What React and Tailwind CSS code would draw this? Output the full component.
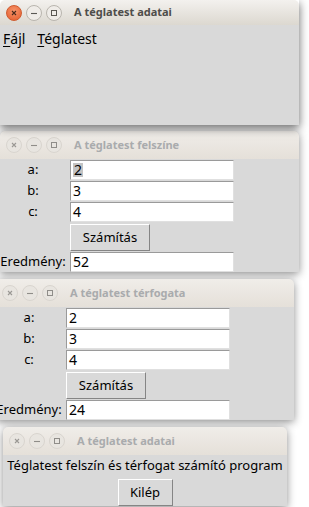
import React from "react";

const FONT = { fontFamily: '"Noto Sans", "DejaVu Sans", sans-serif' };

const TitleButtons = ({ active }) => (
  <div className="flex items-center gap-[4px]">
    <div
      className={
        active
          ? "w-[16px] h-[16px] rounded-full flex items-center justify-center bg-[radial-gradient(circle_at_50%_35%,#f7946a,#e45c2c)] border border-[#cf5a2e]"
          : "w-[16px] h-[16px] rounded-full flex items-center justify-center bg-[#e8e5e0] border border-[#d9d5cf]"
      }
    >
      <svg width="8" height="8" viewBox="0 0 8 8">
        <path d="M2 2 L6 6 M6 2 L2 6" stroke={active ? "#4a2a1c" : "#9a9894"} strokeWidth="1.1" />
      </svg>
    </div>
    <div
      className={
        active
          ? "w-[16px] h-[16px] rounded-full flex items-center justify-center bg-[#efece8] border border-[#b9b5ae]"
          : "w-[16px] h-[16px] rounded-full flex items-center justify-center bg-[#e8e5e0] border border-[#d9d5cf]"
      }
    >
      <svg width="8" height="8" viewBox="0 0 8 8">
        <path d="M1 4.5 L7 4.5" stroke={active ? "#5a5853" : "#8f8d89"} strokeWidth="1.1" />
      </svg>
    </div>
    <div
      className={
        active
          ? "w-[16px] h-[16px] rounded-full flex items-center justify-center bg-[#efece8] border border-[#b9b5ae]"
          : "w-[16px] h-[16px] rounded-full flex items-center justify-center bg-[#e8e5e0] border border-[#d9d5cf]"
      }
    >
      <svg width="8" height="8" viewBox="0 0 8 8">
        <rect x="1.5" y="1.5" width="5" height="5" fill="none" stroke={active ? "#5a5853" : "#8f8d89"} strokeWidth="1" />
      </svg>
    </div>
  </div>
);

const TitleBar = ({ title, active, height }) => (
  <div
    className={
      active
        ? "flex items-center pl-[6px] rounded-t-[5px] bg-gradient-to-b from-[#f3f1ee] to-[#dcd8d0]"
        : "flex items-center pl-[6px] rounded-t-[5px] bg-gradient-to-b from-[#f0ede9] to-[#e5e0d9]"
    }
    style={{ height }}
  >
    <TitleButtons active={active} />
    <span
      className={
        active
          ? "ml-[12px] text-[11px] font-bold text-[#4e4d4a]"
          : "ml-[12px] text-[11px] font-bold text-[#a9abad]"
      }
    >
      {title}
    </span>
  </div>
);

const Entry = ({ value, selected }) => (
  <div className="h-[20px] w-[164px] bg-white border border-[#9a9a9a] border-b-[#e0e0e0] border-r-[#e0e0e0] flex items-center pl-[2px] text-[14px] text-black leading-none">
    <span className={selected ? "bg-[#c3c3c3] px-[1px]" : ""}>{value}</span>
  </div>
);

const TkButton = ({ label, width }) => (
  <div
    className="h-[27px] flex items-center justify-center text-[13px] text-black bg-[#d9d9d9] border border-t-white border-l-white border-b-[#858585] border-r-[#858585]"
    style={{ width }}
  >
    {label}
  </div>
);

const CalcWindow = ({ result, selectA }) => (
  <div className="grid grid-cols-[66px_4px_164px] gap-y-[1px] bg-[#d9d9d9] pt-[1px] text-[13px] text-black">
    <div className="h-[20px] flex items-center justify-center">a:</div>
    <div />
    <Entry value="2" selected={selectA} />
    <div className="h-[20px] flex items-center justify-center">b:</div>
    <div />
    <Entry value="3" />
    <div className="h-[20px] flex items-center justify-center">c:</div>
    <div />
    <Entry value="4" />
    <div />
    <div />
    <div className="h-[28px] pt-[1px]">
      <TkButton label="Számítás" width={80} />
    </div>
    <div className="h-[20px] flex items-center justify-center whitespace-nowrap">Eredmény:</div>
    <div />
    <Entry value={result} />
  </div>
);

export default function App() {
  return (
    <div className="w-[309px] h-[507px] overflow-hidden bg-white relative" style={FONT}>
      <div className="flex flex-col">
        {/* main window */}
        <div className="w-[299px] shadow-[0_3px_9px_rgba(0,0,0,0.6)] relative z-[1]">
          <TitleBar title="A téglatest adatai" active height={25} />
          <div className="h-[100px] bg-[#d9d9d9] text-[14px] text-black">
            <div className="flex gap-[12px] pl-[3px] pt-[3px]">
              <span>
                <span className="underline underline-offset-2">F</span>ájl
              </span>
              <span>
                <span className="underline underline-offset-2">T</span>églatest
              </span>
            </div>
          </div>
        </div>

        {/* surface window */}
        <div className="mt-[6px] w-[299px] bg-[#d9d9d9] shadow-[0_2px_8px_rgba(0,0,0,0.45)] rounded-t-[5px]">
          <TitleBar title="A téglatest felszíne" height={28} />
          <CalcWindow result="52" selectA />
        </div>

        {/* volume window */}
        <div className="mt-[7px] ml-[-4px] w-[298px] bg-[#d9d9d9] shadow-[0_2px_8px_rgba(0,0,0,0.45)] rounded-t-[5px]">
          <TitleBar title="A téglatest térfogata" height={28} />
          <CalcWindow result="24" />
        </div>

        {/* about window */}
        <div className="mt-[7px] ml-[3px] w-[284px] bg-[#d9d9d9] shadow-[0_2px_8px_rgba(0,0,0,0.45)] rounded-t-[5px]">
          <TitleBar title="A téglatest adatai" height={28} />
          <div className="flex flex-col items-center text-[13px] text-black">
            <div className="h-[22px] flex items-center whitespace-nowrap">Téglatest felszín és térfogat számító program</div>
            <div className="mt-[2px]">
              <TkButton label="Kilép" width={55} />
            </div>
          </div>
        </div>
      </div>
    </div>
  );
}
